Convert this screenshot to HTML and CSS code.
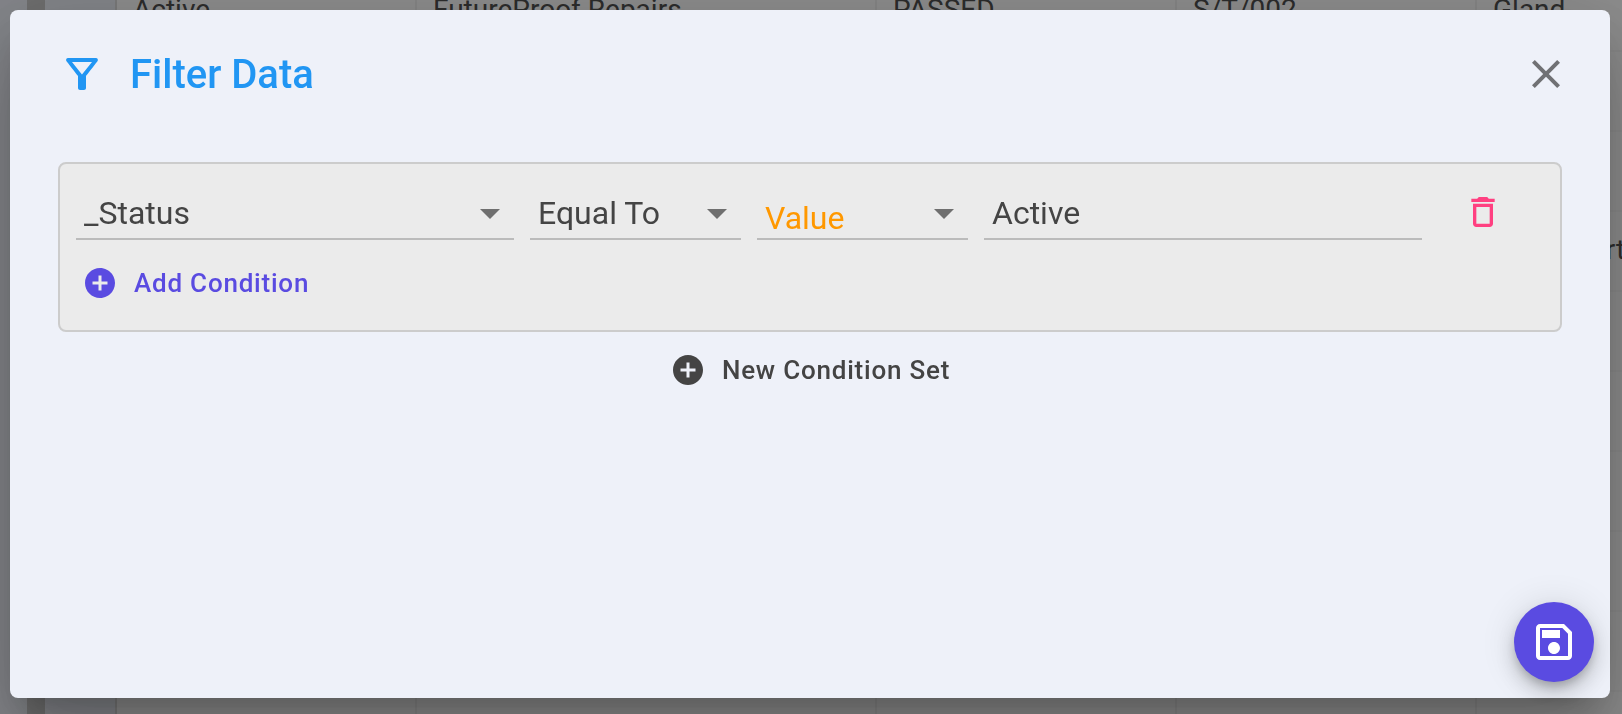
FILE: index.html
```html
<!DOCTYPE html>
<html lang="en">
<head>
    <meta charset="UTF-8">
    <meta name="viewport" content="width=device-width, initial-scale=1.0">
    <title>Filter Data</title>
    <link rel="stylesheet" href="styles.css">
</head>
<body>
    <div class="page" aria-hidden="true">
        <div class="sidebar"></div>
        <div class="splitter"></div>
        <div class="gutter"></div>
        <table class="data-table">
            <colgroup>
                <col class="col-medium">
                <col class="col-wide">
                <col class="col-medium">
                <col class="col-medium">
                <col class="col-medium">
            </colgroup>
            <tbody>
                <tr><td>Active</td><td>FutureProof Repairs</td><td>PASSED</td><td>S/T/002</td><td>Gland</td></tr>
                <tr><td></td><td></td><td></td><td></td><td></td></tr>
                <tr><td></td><td></td><td></td><td></td><td></td></tr>
                <tr><td></td><td></td><td></td><td></td><td>Gland Port</td></tr>
                <tr><td></td><td></td><td></td><td></td><td></td></tr>
                <tr><td></td><td></td><td></td><td></td><td></td></tr>
                <tr><td></td><td></td><td></td><td></td><td></td></tr>
                <tr><td></td><td></td><td></td><td></td><td></td></tr>
                <tr><td></td><td></td><td></td><td></td><td></td></tr>
                <tr><td></td><td></td><td></td><td></td><td></td></tr>
            </tbody>
        </table>
    </div>

    <div class="backdrop">
        <div class="dialog" role="dialog" aria-labelledby="dialog-title">
            <header class="dialog-header">
                <svg class="icon" viewBox="0 0 24 24" aria-hidden="true"><path d="M7 6h10l-5.01 6.3L7 6zm-2.75-.39C6.27 8.2 10 13 10 13v6c0 .55.45 1 1 1h2c.55 0 1-.45 1-1v-6s3.72-4.8 5.74-7.39c.51-.66.04-1.61-.79-1.61H5.04c-.83 0-1.3.95-.79 1.61z"/></svg>
                <h2 id="dialog-title">Filter Data</h2>
                <button type="button" class="btn-close" aria-label="Close">
                    <svg class="icon" viewBox="0 0 24 24"><path d="M19 6.41L17.59 5 12 10.59 6.41 5 5 6.41 10.59 12 5 17.59 6.41 19 12 13.41 17.59 19 19 17.59 13.41 12z"/></svg>
                </button>
            </header>

            <form class="filter-form">
                <div class="condition-set">
                    <div class="condition">
                        <div class="field field-select">
                            <select id="column" aria-label="Column">
                                <option>_Status</option>
                            </select>
                        </div>
                        <div class="field field-select">
                            <select id="operator" aria-label="Operator">
                                <option>Equal To</option>
                            </select>
                        </div>
                        <div class="field field-select field-type">
                            <select id="type" aria-label="Type">
                                <option>Value</option>
                            </select>
                        </div>
                        <div class="field">
                            <input type="text" id="value" aria-label="Value" value="Active">
                        </div>
                        <button type="button" class="btn-delete" aria-label="Delete condition">
                            <svg class="icon" viewBox="0 0 24 24"><path d="M6 19c0 1.1.9 2 2 2h8c1.1 0 2-.9 2-2V7H6v12zM8 9h8v10H8V9zm7.5-5l-1-1h-5l-1 1H5v2h14V4h-3.5z"/></svg>
                        </button>
                    </div>
                    <button type="button" class="btn-text btn-add">
                        <svg class="icon" viewBox="0 0 24 24" aria-hidden="true"><path d="M12 2C6.48 2 2 6.48 2 12s4.48 10 10 10 10-4.48 10-10S17.52 2 12 2zm5 11h-4v4h-2v-4H7v-2h4V7h2v4h4v2z"/></svg>
                        Add Condition
                    </button>
                </div>
                <button type="button" class="btn-text btn-new-set">
                    <svg class="icon" viewBox="0 0 24 24" aria-hidden="true"><path d="M12 2C6.48 2 2 6.48 2 12s4.48 10 10 10 10-4.48 10-10S17.52 2 12 2zm5 11h-4v4h-2v-4H7v-2h4V7h2v4h4v2z"/></svg>
                    New Condition Set
                </button>
            </form>

            <button type="button" class="btn-save" aria-label="Save">
                <svg class="icon" viewBox="0 0 24 24"><path d="M17 3H5c-1.11 0-2 .9-2 2v14c0 1.1.89 2 2 2h14c1.1 0 2-.9 2-2V7l-4-4zm2 16H5V5h11.17L19 7.83V19zm-7-7c-1.66 0-3 1.34-3 3s1.34 3 3 3 3-1.34 3-3-1.34-3-3-3zM6 6h9v4H6z"/></svg>
            </button>
        </div>
    </div>
</body>
</html>
```
FILE: styles.css
```css
* {
    box-sizing: border-box;
}
body {
    font-family: Roboto, Arial, sans-serif;
    margin: 0;
    height: 100vh;
    overflow: hidden;
    color: #444;
}
button {
    font-family: inherit;
    background: none;
    border: none;
    padding: 0;
    cursor: pointer;
}
.icon {
    display: block;
    width: 48px;
    height: 48px;
    fill: currentColor;
    flex: none;
}

/* Table behind the dialog, scrolled a little */
.page {
    display: flex;
    height: 100vh;
    overflow: hidden;
    background-color: #eef1f9;
}
.sidebar {
    width: 27px;
    flex: none;
}
.splitter {
    width: 18px;
    flex: none;
    background-color: #c8c8c8;
}
.gutter {
    width: 70px;
    flex: none;
}
.data-table {
    table-layout: fixed;
    width: 1660px;
    flex: none;
    align-self: flex-start;
    margin-top: -28px;
    border-collapse: separate;
    border-spacing: 0;
    background-color: #fff;
    font-size: 28px;
    line-height: 32px;
    color: #505050;
}
.col-medium {
    width: 300px;
}
.col-wide {
    width: 460px;
}
.data-table td {
    height: 80px;
    padding: 0 16px 2px;
    border-left: 2px solid #f2f2f2;
    border-bottom: 2px solid #f8f8f8;
    white-space: nowrap;
}
.data-table td:first-child {
    border-left-color: #dcdcdc;
}

/* Dialog */
.backdrop {
    position: fixed;
    inset: 0;
    display: flex;
    padding: 10px 12px 16px 10px;
    background-color: rgba(0, 0, 0, 0.45);
}
.dialog {
    position: relative;
    flex: 1;
    padding: 40px 48px;
    background-color: #eef1f9;
    border-radius: 8px;
    box-shadow: 0 22px 30px -14px rgba(0, 0, 0, 0.2),
        0 48px 76px 6px rgba(0, 0, 0, 0.14),
        0 18px 92px 16px rgba(0, 0, 0, 0.12);
}
.dialog-header {
    display: flex;
    align-items: center;
    gap: 24px;
    margin: 0 -8px 64px 0;
    color: #2196f3;
}
.dialog-header h2 {
    flex: 1;
    margin: 0;
    padding-top: 2px;
    font-size: 40px;
    line-height: 46px;
    font-weight: 500;
}
.btn-close {
    color: #707174;
}
.filter-form {
    display: flex;
    flex-direction: column;
    align-items: center;
}
.condition-set {
    width: 100%;
    padding: 20px 16px 14px;
    background-color: #ebebeb;
    border: 2px solid #ccc;
    border-radius: 8px;
}
.condition {
    display: grid;
    grid-template-columns: 438fr 211fr 211fr 438fr 90px;
    gap: 16px;
    padding-right: 16px;
}
.field {
    position: relative;
    min-width: 0;
}
.field select,
.field input {
    display: block;
    width: 100%;
    height: 56px;
    padding: 4px 8px 0;
    border: none;
    border-bottom: 2px solid #bbb;
    border-radius: 0;
    outline: none;
    appearance: none;
    background: none;
    color: #444;
    font-family: inherit;
    font-size: 32px;
}
.field-select::after {
    content: "";
    position: absolute;
    top: 25px;
    right: 14px;
    border: 10px solid transparent;
    border-top-color: #6f6f6f;
    border-bottom: none;
    pointer-events: none;
}
.field-type select {
    padding-top: 14px;
    color: #ff9800;
}
.btn-delete {
    display: flex;
    justify-content: center;
    align-items: center;
    color: #ff4081;
}
.btn-delete .icon {
    width: 40px;
    height: 40px;
}
.btn-text {
    display: flex;
    align-items: center;
    gap: 16px;
    height: 66px;
    padding: 0 6px;
    font-size: 26px;
    font-weight: 500;
    letter-spacing: 0.03em;
}
.btn-text .icon {
    width: 36px;
    height: 36px;
}
.btn-add {
    margin-top: 10px;
    color: #5a4be1;
}
.btn-new-set {
    margin-top: 5px;
    color: #444;
}
.btn-save {
    position: absolute;
    right: 16px;
    bottom: 16px;
    display: flex;
    justify-content: center;
    align-items: center;
    width: 80px;
    height: 80px;
    border-radius: 50%;
    background-color: #5a4be1;
    color: #fff;
    box-shadow: 0 6px 10px -2px rgba(0, 0, 0, 0.2),
        0 12px 20px 0 rgba(0, 0, 0, 0.14),
        0 2px 36px 0 rgba(0, 0, 0, 0.12);
}
```
